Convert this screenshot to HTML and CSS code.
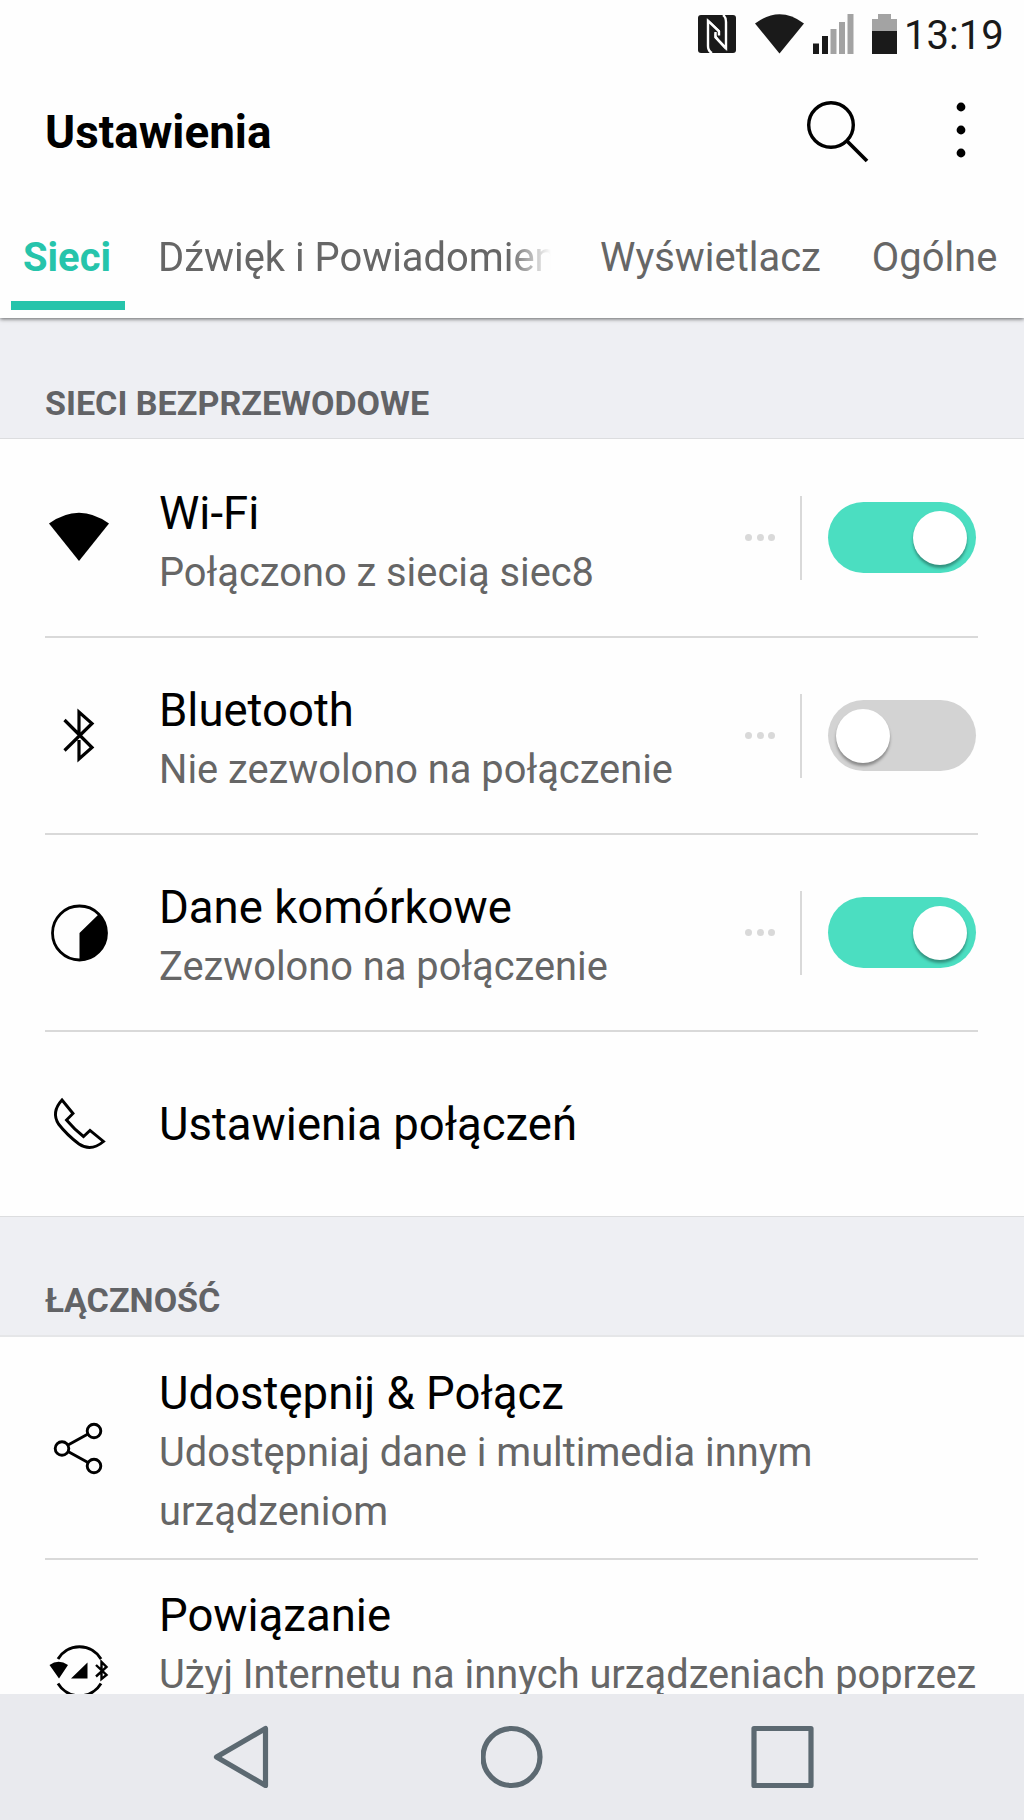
FILE: index.html
```html
<!DOCTYPE html>
<html lang="pl">
<head>
    <meta charset="UTF-8">
    <meta name="viewport" content="width=device-width, initial-scale=1.0">
    <title>Ustawienia</title>
    <link rel="stylesheet" href="styles.css">
</head>
<body>
<div class="screen">

    <header class="header">
        <!-- Status bar -->
        <div class="status-bar">
            <svg class="status-nfc" width="38" height="38" viewBox="0 0 38 38">
                <rect width="38" height="38" rx="3" fill="#1a1a1a"/>
                <path d="M14 38Q10 36 10 31V6L21 16.500V20.500M17.500 17V22L28 33V7Q28 2 25 0" fill="none" stroke="#fff" stroke-width="2.400"/>
                <path d="M9 3L22 15.500V19zM29 36.500L16.500 23V18z" fill="#fff"/>
            </svg>
            <svg class="status-wifi" width="49" height="40" viewBox="0 0 49 40">
                <path d="M0 9.500Q24.500-9 49 9.500L24.500 39.500z" fill="#1a1a1a"/>
            </svg>
            <svg class="status-signal" width="41" height="40" viewBox="0 0 41 40">
                <path d="M0 29.500h6V40H0zM9 22h6v18H9z" fill="#1a1a1a"/>
                <path d="M17.500 15h6v25h-6zM26 8h6v32h-6zM34.500 0h6v40h-6z" fill="#a3a3a3"/>
            </svg>
            <svg class="status-battery" width="25" height="40" viewBox="0 0 25 40">
                <path d="M6 0h13v5h6v12H0V5h6z" fill="#a3a3a3"/>
                <path d="M0 17h25v23H0z" fill="#1a1a1a"/>
            </svg>
            <span class="clock">13:19</span>
        </div>

        <div class="title-bar">
            <h1>Ustawienia</h1>
            <svg class="search" width="64" height="64" viewBox="0 0 64 64">
                <circle cx="25" cy="25" r="22.300" fill="none" stroke="#000" stroke-width="3.400"/>
                <path d="M41 41l20 20" stroke="#000" stroke-width="3.800"/>
            </svg>
            <svg class="more" width="10" height="56" viewBox="0 0 10 56">
                <circle cx="5" cy="5" r="4.400"/>
                <circle cx="5" cy="28" r="4.400"/>
                <circle cx="5" cy="51" r="4.400"/>
            </svg>
        </div>

        <nav class="tabs">
            <span class="tab active">Sieci</span>
            <span class="tab fade">Dźwięk i Powiadomienia</span>
            <span class="tab display">Wyświetlacz</span>
            <span class="tab general">Ogólne</span>
        </nav>
    </header>

    <main class="content">
        <h2 class="section-title">SIECI BEZPRZEWODOWE</h2>

        <section class="list">
            <div class="row">
                <svg class="icon" width="68" height="68" viewBox="0 0 68 68">
                    <path d="M4 19.500Q34-2 64 19.500L34 57z"/>
                </svg>
                <div class="text">
                    <div class="name">Wi-Fi</div>
                    <div class="desc">Połączono z siecią siec8</div>
                </div>
                <div class="dots"><i></i><i></i><i></i></div>
                <div class="switch on"><span class="knob"></span></div>
            </div>

            <div class="row">
                <svg class="icon" width="68" height="68" viewBox="0 0 68 68">
                    <path d="M19.500 18L47 45.500 34 57V38M19.500 48.500L47 21.500 34 10v24" fill="none" stroke="#000" stroke-width="3.200"/>
                </svg>
                <div class="text">
                    <div class="name">Bluetooth</div>
                    <div class="desc">Nie zezwolono na połączenie</div>
                </div>
                <div class="dots"><i></i><i></i><i></i></div>
                <div class="switch"><span class="knob"></span></div>
            </div>

            <div class="row">
                <svg class="icon" width="68" height="68" viewBox="0 0 68 68">
                    <circle cx="34.500" cy="34" r="27" fill="none" stroke="#000" stroke-width="2.800"/>
                    <path d="M34.500 34L54 15A28 28 0 0 1 34.500 62z"/>
                </svg>
                <div class="text">
                    <div class="name">Dane komórkowe</div>
                    <div class="desc">Zezwolono na połączenie</div>
                </div>
                <div class="dots"><i></i><i></i><i></i></div>
                <div class="switch on"><span class="knob"></span></div>
            </div>

            <div class="row single">
                <svg class="icon" width="68" height="68" viewBox="0 0 68 68">
                    <path d="M17 10L28 23.500 21.500 30Q29 39 38.500 46.500L45 40.500 58.500 51.500Q46 62 34 54Q22 45 13.500 34Q6 22 17 10z" fill="none" stroke="#000" stroke-width="2.900"/>
                </svg>
                <div class="text">
                    <div class="name">Ustawienia połączeń</div>
                </div>
            </div>
        </section>

        <h2 class="section-title second">ŁĄCZNOŚĆ</h2>

        <section class="list">
            <div class="row tall">
                <svg class="icon" width="68" height="68" viewBox="0 0 68 68">
                    <g fill="none" stroke="#000" stroke-width="2.900">
                        <circle cx="17" cy="34.500" r="6.800"/>
                        <circle cx="49" cy="17" r="6.800"/>
                        <circle cx="49" cy="52" r="6.800"/>
                        <path d="M23 31l20-11M23 37.500l20 11"/>
                    </g>
                </svg>
                <div class="text">
                    <div class="name">Udostępnij &amp; Połącz</div>
                    <div class="desc">Udostępniaj dane i multimedia innym urządzeniom</div>
                </div>
            </div>

            <div class="row tall">
                <svg class="icon" width="68" height="68" viewBox="0 0 68 68">
                    <path d="M13 21A25 25 0 0 1 56 21M13 45.500A25 25 0 0 0 56 45.500" fill="none" stroke="#000" stroke-width="2.900"/>
                    <path d="M4.500 27Q13.500 20.500 23 27L14 40.500zM26 40.500L42.500 24.500V40.500z"/>
                    <path d="M51 27L61.500 37 56.500 41V24L61.500 29 51 38.500" fill="none" stroke="#000" stroke-width="2.400"/>
                </svg>
                <div class="text">
                    <div class="name">Powiązanie</div>
                    <div class="desc nowrap">Użyj Internetu na innych urządzeniach poprzez</div>
                </div>
            </div>
        </section>
    </main>

    <!-- Android navigation keys -->
    <footer class="nav-bar">
        <svg width="64" height="64" viewBox="0 0 64 64">
            <path d="M6.500 32L55.500 3.500V60.500z"/>
        </svg>
        <svg width="64" height="64" viewBox="0 0 64 64">
            <circle cx="30.500" cy="32" r="28.500"/>
        </svg>
        <svg width="64" height="64" viewBox="0 0 64 64">
            <rect x="3" y="3.500" width="57" height="57"/>
        </svg>
    </footer>

</div>
</body>
</html>
```
FILE: styles.css
```css
* {
    box-sizing: border-box;
}

body, html {
    margin: 0;
    padding: 0;
    font-family: Roboto, "Liberation Sans", sans-serif;
    background-color: #fefefe;
}

.screen {
    display: flex;
    flex-direction: column;
    width: 1024px;
    height: 1820px;
    overflow: hidden;
}

/* Header */
.header {
    position: relative;
    flex: none;
    height: 318px;
    background-color: #fefefe;
    box-shadow: 0 1px 4px rgba(0, 0, 0, 0.6);
    z-index: 1;
}

.status-bar {
    display: flex;
    align-items: flex-start;
    height: 70px;
    padding: 14px 0 0 698px;
}

.status-nfc { margin: 1px 19px 0 0; }
.status-wifi { margin-right: 9px; }
.status-signal { margin-right: 18px; }
.status-battery { margin-right: 7px; }

.clock {
    font-size: 40px;
    line-height: 44px;
    color: #1a1a1a;
}

.title-bar {
    display: flex;
    align-items: center;
    height: 124px;
    padding: 0 58px 0 45px;
}

.title-bar h1 {
    flex: 1;
    margin: 0;
    font-size: 45.8px;
    font-weight: 700;
}

.search { margin-right: 86px; }
.more { margin-bottom: 4px; }

/* Tabs */
.tabs {
    display: flex;
    height: 116px;
    padding-left: 11px;
    font-size: 39.9px;
    line-height: 128px;
    color: #666;
    white-space: nowrap;
}

.tab.active {
    width: 114px;
    padding-left: 12px;
    height: 116px;
    background: linear-gradient(#26c4ab, #26c4ab) 0 107px / 114px 9px no-repeat;
    color: #26c4ab;
    font-weight: 700;
}

.tab.fade {
    width: 395px;
    margin-left: 33px;
    overflow: hidden;
    -webkit-mask-image: linear-gradient(to right, #000 350px, transparent 393px);
    mask-image: linear-gradient(to right, #000 350px, transparent 393px);
}

.tab.display { margin-left: 47px; }
.tab.general { margin-left: 51px; }

/* Settings list */
.content {
    flex: 1;
    min-height: 0;
    overflow: hidden;
}

.section-title {
    height: 121px;
    margin: 0;
    padding: 65px 0 0 45px;
    background-color: #eeeff3;
    border-bottom: 1px solid #dcdddf;
    font-size: 34.1px;
    font-weight: 700;
    line-height: 40px;
    color: #626366;
}

.section-title.second {
    padding-top: 63px;
    border-top: 1px solid #dcdddf;
    border-bottom: 2px solid #e5e6e8;
}

.row {
    display: flex;
    align-items: center;
    height: 197px;
    margin: 0 46px 0 45px;
    border-bottom: 2px solid #d9d9d9;
}

.row:first-child { height: 199px; }
.row.single { height: 184px; }

.row:last-child {
    border-bottom: none;
}

.icon {
    flex: none;
    margin-right: 46px;
}

.text {
    flex: 1;
    align-self: flex-start;
    padding-top: 44px;
}

.row:first-child .text { padding-top: 46px; }
.row.single .text { padding-top: 64px; }

.row.tall, .row.tall:first-child { height: 223px; }
.row.tall .text { padding-top: 27px; }
.row.tall:first-child .text { padding-top: 28px; }

.name {
    font-size: 45.5px;
    line-height: 58px;
    color: #000;
}

.desc {
    font-size: 39.8px;
    line-height: 59px;
    color: #666;
}

.desc.nowrap {
    white-space: nowrap;
}

.dots {
    display: flex;
    align-items: center;
    gap: 4.500px;
    height: 84px;
    padding-right: 25px;
    margin-right: 26px;
    border-right: 2px solid #d9d9d9;
}

.dots i {
    width: 7px;
    height: 7px;
    border-radius: 50%;
    background-color: #d9d9d9;
}

.switch {
    display: flex;
    align-items: center;
    width: 148px;
    height: 71px;
    padding: 0 9px 0 8px;
    margin-right: 2px;
    border-radius: 36px;
    background-color: #d3d3d3;
}

.switch.on {
    justify-content: flex-end;
    background-color: #4bdec1;
}

.knob {
    width: 54px;
    height: 54px;
    border-radius: 50%;
    background-color: #fff;
    box-shadow: 0 3px 3px rgba(0, 0, 0, 0.35);
}

/* Bottom bar */
.nav-bar {
    display: flex;
    flex: none;
    justify-content: space-between;
    align-items: center;
    height: 126px;
    padding: 0 209px 0 210px;
    background-color: #e9eaee;
    z-index: 1;
}

.nav-bar svg {
    fill: none;
    stroke: #5c6971;
    stroke-width: 5.2;
    stroke-linejoin: round;
}
```
